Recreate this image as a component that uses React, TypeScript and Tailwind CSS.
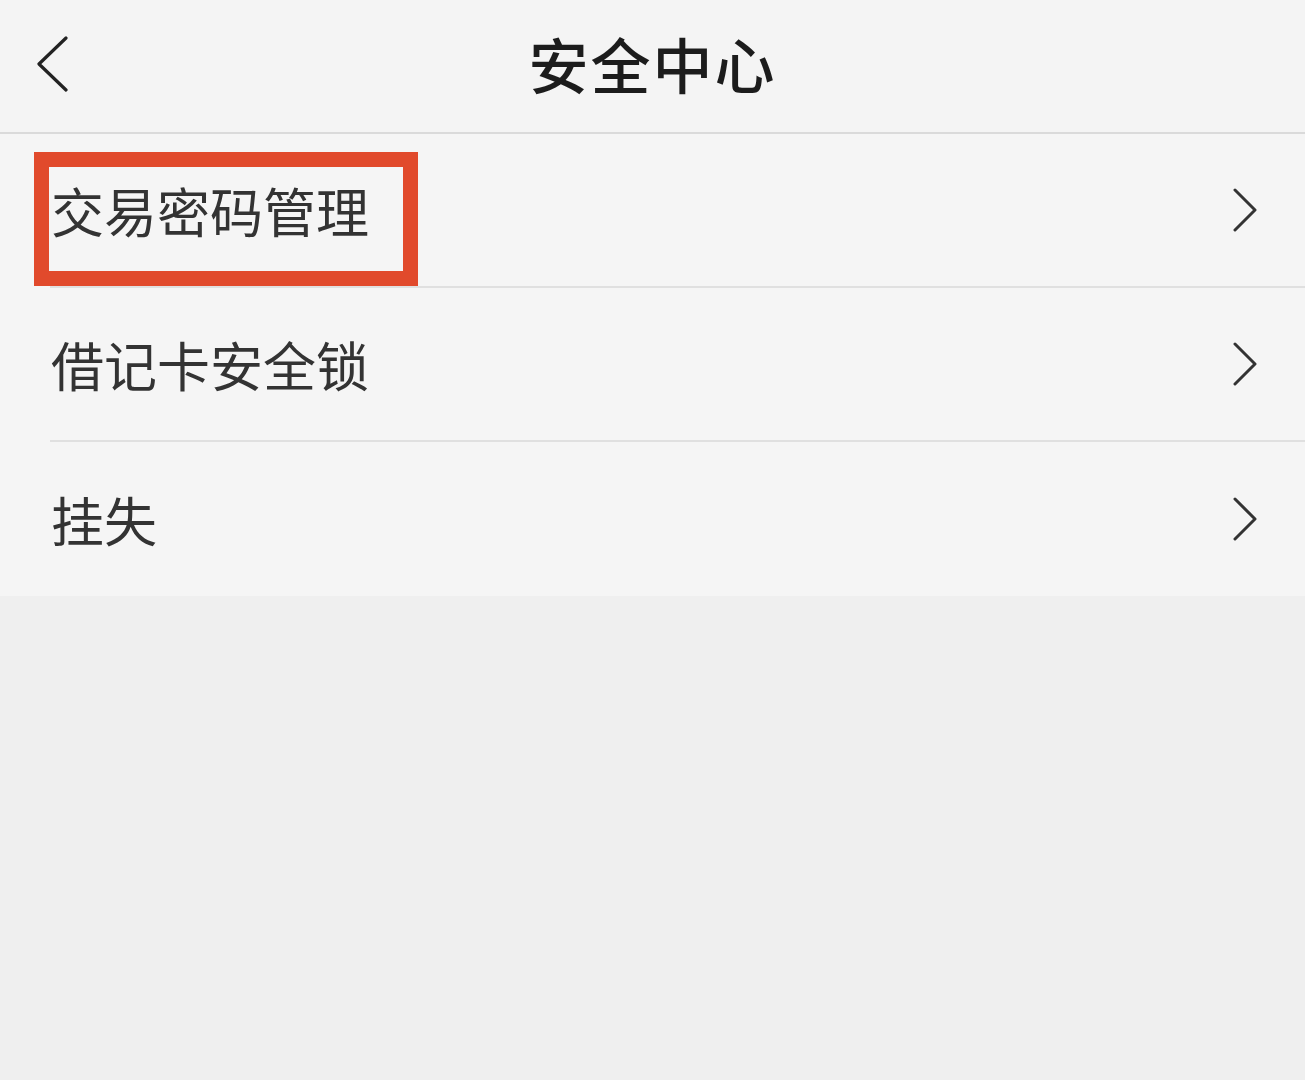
import React from 'react';

const font = { fontFamily: '"Noto Sans CJK SC", "Noto Sans", sans-serif' };

const ChevronRight: React.FC = () => (
  <svg viewBox="0 0 24 44" className="w-[24px] h-[44px] text-[#333]" fill="none" stroke="currentColor" strokeWidth={3} strokeLinecap="round" strokeLinejoin="round">
    <polyline points="2,2 22,22 2,42" />
  </svg>
);

const rows = ['交易密码管理', '借记卡安全锁', '挂失'];

const App: React.FC = () => {
  return (
    <div className="w-[1305px] h-[1080px] bg-[#efefef] text-[#333]" style={font}>
      <header className="h-[134px] bg-[#f4f4f4] border-b-2 border-[#dadada] grid grid-cols-[1fr_auto_1fr] items-center pl-[36px]">
        <button className="justify-self-start text-[#222] -mt-[4px]">
          <svg viewBox="0 0 32 56" className="w-[32px] h-[56px]" fill="none" stroke="currentColor" strokeWidth={3.2} strokeLinecap="round" strokeLinejoin="round">
            <polyline points="30,2 3,28 30,54" />
          </svg>
        </button>
        <h1 className="text-[60px] font-medium text-[#1c1c1c] tracking-[2px] leading-none -mt-[6px] -ml-[36px]">安全中心</h1>
        <div />
      </header>
      <ul className="bg-[#f5f5f5] pl-[50px]">
        {rows.map((label, i) => (
          <li
            key={label}
            className={`relative h-[154px] flex items-center pr-[48px] ${i < rows.length - 1 ? 'border-b-2 border-[#e0e0e0]' : ''}`}
          >
            <span className="text-[53px] leading-none text-[#333] ml-[1px] mt-[1px]">{label}</span>
            <span className="ml-auto flex">
              <ChevronRight />
            </span>
            {i === 0 && (
              <div className="absolute -left-[16px] top-[18px] w-[384px] h-[134px] border-[15px] border-[#e14a2c]" />
            )}
          </li>
        ))}
      </ul>
    </div>
  );
};

export default App;
